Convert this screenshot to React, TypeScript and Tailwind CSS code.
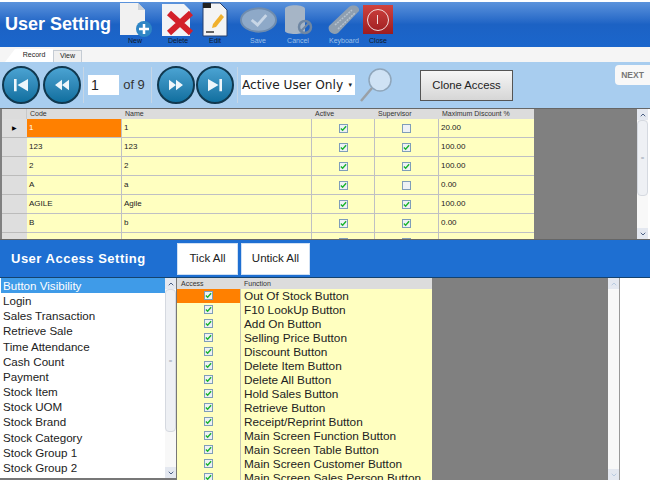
import { ChevronUp, ChevronDown } from 'lucide-react';

const users = [
  { code: '1', name: '1', active: true, sup: false, disc: '20.00' },
  { code: '123', name: '123', active: true, sup: true, disc: '100.00' },
  { code: '2', name: '2', active: true, sup: true, disc: '100.00' },
  { code: 'A', name: 'a', active: true, sup: false, disc: '0.00' },
  { code: 'AGILE', name: 'Agile', active: true, sup: true, disc: '100.00' },
  { code: 'B', name: 'b', active: true, sup: true, disc: '0.00' },
  { code: '', name: '', active: true, sup: true, disc: '' },
];

const modules = [
  'Button Visibility', 'Login', 'Sales Transaction', 'Retrieve Sale', 'Time Attendance', 'Cash Count', 'Payment',
  'Stock Item', 'Stock UOM', 'Stock Brand', 'Stock Category', 'Stock Group 1', 'Stock Group 2',
];

const functions = [
  'Out Of Stock Button', 'F10 LookUp Button', 'Add On Button', 'Selling Price Button', 'Discount Button',
  'Delete Item Button', 'Delete All Button', 'Hold Sales Button', 'Retrieve Button', 'Receipt/Reprint Button',
  'Main Screen Function Button', 'Main Screen Table Button', 'Main Screen Customer Button', 'Main Screen Sales Person Button',
];

function Check({ on }: { on: boolean }) {
  return (
    <span className="flex h-[9px] w-[9px] items-center justify-center border border-[#7f9db9] bg-[#eef1f5]">
      {on && (
        <svg viewBox="0 0 8 8" className="h-[7px] w-[7px]">
          <path d="M1 4l2 2 4-4.500" fill="none" stroke="#19b32b" strokeWidth="1.600" />
        </svg>
      )}
    </span>
  );
}

function Tool({ label, dim, className, children }: { label: string; dim?: boolean; className?: string; children: React.ReactNode }) {
  return (
    <div className={`flex w-[34px] flex-col items-center ${className ?? ''}`}>
      <div className="flex h-[35px] w-full items-center justify-center">{children}</div>
      <span className={`whitespace-nowrap text-[7px] leading-[8px] ${dim ? 'text-[#9fc0e6]' : 'text-[#10182a]'}`}>{label}</span>
    </div>
  );
}

function NavButton({ kind }: { kind: 'first' | 'prev' | 'next' | 'last' }) {
  return (
    <div className="flex h-[38px] w-[38px] shrink-0 items-center justify-center rounded-full border-2 border-[#10384f] bg-gradient-to-b from-[#4aa3d2] to-[#0f6f9f]">
      <svg viewBox="0 0 20 16" className="h-[14px] w-[18px]" fill="#eef6fb">
        {kind === 'first' && <path d="M2 1h3v14H2zM18 1v14L6 8z" />}
        {kind === 'prev' && <path d="M10 2v12L2 8zM18 2v12l-8-6z" />}
        {kind === 'next' && <path d="M2 2l8 6-8 6zM10 2l8 6-8 6z" />}
        {kind === 'last' && <path d="M2 1l12 7-12 7zM15 1h3v14h-3z" />}
      </svg>
    </div>
  );
}

function ScrollBar({ thumb, faded }: { thumb: number; faded?: boolean }) {
  const arrow = faded ? 'text-[#b9cbe0]' : 'text-[#4d6185]';
  return (
    <div className="flex w-[11px] shrink-0 flex-col bg-[#f8f8f8]">
      <div className="flex h-[11px] items-center justify-center bg-[#e4e8f0]">
        <ChevronUp className={`h-[8px] w-[8px] ${arrow}`} strokeWidth={3} />
      </div>
      <div className="min-h-0 flex-1">
        {thumb > 0 && (
          <div className="flex items-center justify-center rounded-sm border border-[#d5d9e0] bg-[#eef0f4]" style={{ height: thumb }}>
            <span className="text-[6px] leading-none text-[#9aa3b2]">=</span>
          </div>
        )}
      </div>
      <div className="flex h-[11px] items-center justify-center bg-[#e4e8f0]">
        <ChevronDown className={`h-[8px] w-[8px] ${arrow}`} strokeWidth={3} />
      </div>
    </div>
  );
}

export default function App() {
  return (
    <div className="flex h-[480px] w-[650px] flex-col overflow-hidden bg-white font-['Liberation_Sans',sans-serif] text-black">
      {/* title bar */}
      <div className="mt-[2px] flex h-[45px] shrink-0 bg-gradient-to-b from-[#5b93dc] via-[#1c62c4] to-[#1b66cc]">
        <h1 className="w-[118px] self-center whitespace-nowrap pl-[5px] text-[18px] font-bold text-white">User Setting</h1>
        <div className="flex items-start">
          <Tool label="New">
            <svg viewBox="0 0 36 35" className="h-[35px] w-[36px] shrink-0">
              <path d="M3 1h18l7 7v25H3z" fill="#f1f1f1" />
              <path d="M21 1l7 7h-7z" fill="#cfd3d8" />
              <circle cx="27" cy="27" r="8" fill="#2f86c5" />
              <path d="M27 22v10M22 27h10" stroke="#fff" strokeWidth="2.500" />
            </svg>
          </Tool>
          <Tool label="Delete" className="ml-[9px]">
            <svg viewBox="0 0 34 35" className="h-[35px] w-[34px] shrink-0">
              <path d="M1 2h22l6 6v26H1z" fill="#f1f3f6" />
              <path d="M8 11l22 20M30 11L8 31" stroke="#d3202a" strokeWidth="6" />
            </svg>
          </Tool>
          <Tool label="Edit" className="ml-[3px]">
            <svg viewBox="0 0 26 35" className="h-[35px] w-[26px] shrink-0">
              <path d="M1 1h17l7 7v26H1z" fill="#f4f4f4" stroke="#27416f" strokeWidth="1" />
              <path d="M1 1h8v5H1z" fill="#222" />
              <path d="M19 12l3 3-8 10-4 1 1-4z" fill="#f0b02d" />
              <path d="M4 30h8" stroke="#333" strokeWidth="1.500" />
            </svg>
          </Tool>
          <Tool label="Save" dim className="ml-[9px]">
            <svg viewBox="0 0 38 26" className="h-[26px] w-[37px] shrink-0">
              <ellipse cx="19" cy="13" rx="18" ry="12" fill="#8ea9c8" stroke="#6f8cae" strokeWidth="2" />
              <path d="M12 13l6 5 9-10" fill="none" stroke="#c8d6e6" strokeWidth="3" />
            </svg>
          </Tool>
          <Tool label="Cancel" dim className="ml-[6px]">
            <svg viewBox="0 0 32 32" className="h-[32px] w-[32px] shrink-0">
              <path d="M3 5c0-5 20-5 20 0v22c0 4-20 4-20 0z" fill="#a6b5c6" />
              <circle cx="23" cy="23" r="6" fill="none" stroke="#6f87a3" strokeWidth="2.500" />
              <path d="M19 27l8-8" stroke="#6f87a3" strokeWidth="2" />
            </svg>
          </Tool>
          <Tool label="Keyboard" dim className="ml-[12px]">
            <svg viewBox="0 0 34 32" className="h-[32px] w-[34px] shrink-0">
              <path d="M2 22L22 3c4-3 11-1 10 4L11 29c-5 3-11-2-9-7z" fill="#8f9fb0" />
              <path d="M8 21L25 6M11 25L28 9" stroke="#b6c2cf" strokeWidth="1.500" strokeDasharray="2 1" />
            </svg>
          </Tool>
          <Tool label="Close">
            <div className="flex h-[29px] w-[30px] shrink-0 items-center justify-center bg-gradient-to-b from-[#d0423f] to-[#9c1c20]">
              <div className="relative h-[22px] w-[22px] rounded-full border border-[#f2dcdc]">
                <div className="absolute left-[9px] top-[5px] h-[9px] w-px bg-[#f2dcdc]" />
              </div>
            </div>
          </Tool>
        </div>
      </div>

      {/* tabs */}
      <div className="flex h-[15px] shrink-0 items-end bg-[#f5f5f5] pl-[5px]">
        <div className="flex h-[13px] w-[48px] items-center justify-center bg-white pl-[10px] text-[7px] text-[#222] [clip-path:polygon(0_100%,10px_0,100%_0,100%_100%)]">Record</div>
        <div className="flex h-[12px] w-[29px] items-center justify-center border border-b-0 border-[#c5ccd4] bg-[#f0f0f0] text-[7px] text-[#222]">View</div>
      </div>

      {/* record toolbar */}
      <div className="relative flex h-[46px] shrink-0 items-center bg-[#a8cdef] pl-[2px]">
        <NavButton kind="first" />
        <div className="w-[3px]" />
        <NavButton kind="prev" />
        <div className="mx-[2px] h-[36px] w-px bg-[#c6d6e6]" />
        <div className="ml-[2px] flex h-[20px] w-[31px] items-center bg-white pl-[3px] text-[14px] text-[#222]">1</div>
        <span className="w-[30px] text-center text-[13px] text-[#333]">of 9</span>
        <div className="mx-[2px] h-[36px] w-px bg-[#c6d6e6]" />
        <div className="w-[3px]" />
        <NavButton kind="next" />
        <div className="w-[1px]" />
        <NavButton kind="last" />
        <div className="mx-[3px] h-[36px] w-px bg-[#c6d6e6]" />
        <div className="flex h-[20px] w-[114px] items-center justify-between bg-white pl-[1px] pr-[3px] font-['DejaVu_Sans',sans-serif] text-[12.200px] text-[#222]">
          <span className="whitespace-nowrap">Active User Only</span>
          <span className="text-[7px]">▾</span>
        </div>
        <svg viewBox="0 0 34 38" className="ml-[4px] h-[38px] w-[34px] shrink-0">
          <circle cx="21" cy="14" r="11" fill="#cfe2f4" stroke="#8fa6bb" strokeWidth="1.500" />
          <path d="M13 22L2 35" stroke="#9aa0a6" strokeWidth="2.500" />
        </svg>
        <div className="ml-[27px] flex h-[31px] w-[93px] items-center justify-center border border-[#555] bg-gradient-to-b from-[#f6f6f6] to-[#d6d6d6] text-[11.300px] text-[#222]">
          Clone Access
        </div>
        <div className="absolute right-0 top-[3px] flex h-[20px] w-[35px] items-center justify-center rounded-l bg-[#f8f8f8] text-[8.500px] font-bold text-[#777]">
          NEXT
        </div>
      </div>

      {/* user grid */}
      <div className="flex h-[132px] shrink-0 border-y border-[#666] bg-[#808080]">
        <div className="min-w-0 flex-1 overflow-hidden pl-[2px]">
          <div className="grid h-[10px] w-[532px] grid-cols-[25px_95px_190px_63px_64px_95px] bg-[#dcdcdc] text-[7px] leading-[10px] text-[#333]">
            <span className="border-r border-[#c8c8c8]" />
            <span className="pl-[3px]">Code</span>
            <span className="pl-[3px]">Name</span>
            <span className="pl-[3px]">Active</span>
            <span className="pl-[3px]">Supervisor</span>
            <span className="pl-[3px]">Maximum Discount %</span>
          </div>
          {users.map((u, i) => (
            <div key={i} className="grid h-[19px] w-[532px] shrink-0 grid-cols-[25px_95px_190px_63px_64px_95px] text-[8px] text-[#222]">
              <div className="flex items-center justify-center border-b border-[#bbb] bg-[#dedede]">
                {i === 0 && <span className="text-[6px] leading-none text-black">▶</span>}
              </div>
              <div className={`flex items-center border-b border-r border-[#bfc0c4] pl-[2px] ${i === 0 ? 'bg-[#ff8000] text-white' : 'bg-[#ffffc0]'}`}>{u.code}</div>
              <div className="flex items-center border-b border-r border-[#bfc0c4] bg-[#ffffc0] pl-[2px]">{u.name}</div>
              <div className="flex items-center justify-center border-b border-r border-[#bfc0c4] bg-[#ffffc0]"><Check on={u.active} /></div>
              <div className="flex items-center justify-center border-b border-r border-[#bfc0c4] bg-[#ffffc0]"><Check on={u.sup} /></div>
              <div className="flex items-center border-b border-[#bfc0c4] bg-[#ffffc0] pl-[2px]">{u.disc}</div>
            </div>
          ))}
        </div>
        <ScrollBar thumb={76} />
        <div className="w-[2px] bg-white" />
      </div>

      {/* access header */}
      <div className="flex h-[37px] shrink-0 items-center bg-[#1e6fd2]">
        <h2 className="w-[177px] whitespace-nowrap pl-[11px] text-[13px] font-bold tracking-[0.5px] text-white">User Access Setting</h2>
        <button className="flex h-[32px] w-[61px] items-center justify-center border border-[#cfe0f4] bg-white text-[11.500px] text-[#222]">Tick All</button>
        <button className="ml-[3px] flex h-[32px] w-[69px] items-center justify-center border border-[#cfe0f4] bg-white text-[11.500px] text-[#222]">Untick All</button>
      </div>

      {/* access lists */}
      <div className="flex min-h-0 flex-1 border-t border-[#14426e]">
        <div className="flex w-[177px] shrink-0 border-r border-b-2 border-[#777] pl-[1px]">
          <ul className="min-w-0 flex-1 overflow-hidden text-[11.600px] leading-[15.150px] text-[#222]">
            {modules.map((m, i) => (
              <li key={m} className={`whitespace-nowrap pl-[2px] ${i === 0 ? 'bg-[#3f9be8] text-white' : ''}`}>{m}</li>
            ))}
          </ul>
          <ScrollBar thumb={143} />
        </div>
        <div className="flex w-[443px] shrink-0 border-r border-[#999] bg-[#808080]">
          <div className="min-w-0 flex-1 overflow-hidden">
            <div className="grid h-[11px] w-[255px] grid-cols-[64px_191px] bg-[#dcdcdc] text-[7px] leading-[11px] text-[#333]">
              <span className="pl-[4px]">Access</span>
              <span className="pl-[3px]">Function</span>
            </div>
            {functions.map((f, i) => (
              <div key={f} className="grid h-[14px] w-[255px] grid-cols-[64px_191px]">
                <div className={`flex items-center justify-center border-b border-r border-[#c4c4b8] ${i === 0 ? 'bg-[#ff8000]' : 'bg-[#ffffc0]'}`}>
                  <Check on />
                </div>
                <div className="flex items-center whitespace-nowrap border-b border-[#c4c4b8] bg-[#ffffc0] pl-[3px] pt-[2px] text-[11.800px] leading-none text-[#222]">{f}</div>
              </div>
            ))}
          </div>
          <ScrollBar thumb={0} faded />
        </div>
      </div>
    </div>
  );
}
